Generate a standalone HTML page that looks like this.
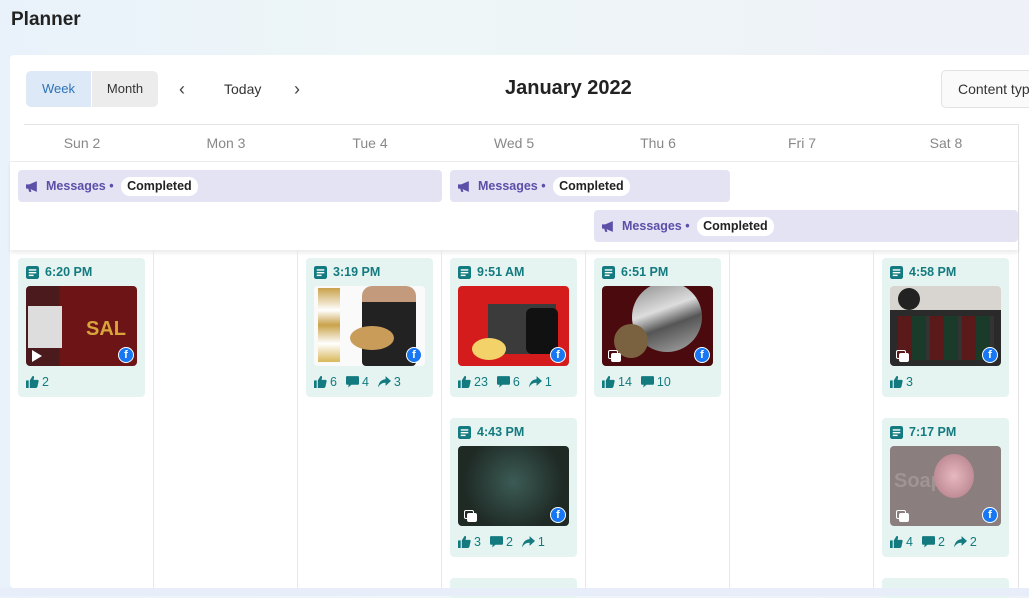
<!DOCTYPE html>
<html><head><meta charset="utf-8"><style>
*{box-sizing:border-box;margin:0;padding:0}
body{width:1029px;height:596px;overflow:hidden;position:relative;font-family:"Liberation Sans",sans-serif;background:linear-gradient(90deg,#e9f2fb 0%,#eef6f7 40%,#eef1f8 100%)}
.a{position:absolute}
h1{position:absolute;left:11px;top:9px;font-size:19px;font-weight:bold;color:#222}
.panel{left:10px;top:55px;width:1030px;height:533px;background:#fff;border-radius:4px}
.seg{top:71px;height:36px;border-radius:5px;font-size:13px;line-height:36px;text-align:center}
.day{top:125px;height:36px;line-height:36px;width:144px;text-align:center;font-size:14px;color:#888}
.vl{width:1px;background:#e8e8e8;top:250px;height:346px}
.bar{height:32px;background:#e3e3f4;border-radius:4px;font-size:12.5px;font-weight:bold;color:#5b4fa8;line-height:32px;padding-left:28px}
.bar svg{position:absolute;left:8px;top:11px}
.pill{display:inline-block;background:#fff;color:#222;border-radius:9px;padding:0 6px;line-height:19px;font-weight:bold;margin-left:4px}
.card{width:127px;height:139px;background:#e6f4f1;border-radius:4px}
.t{position:absolute;left:8px;top:7px;font-size:12.5px;font-weight:bold;color:#137b80;padding-left:19px;line-height:14px}
.t svg{position:absolute;left:0;top:1px}
.img{position:absolute;left:8px;top:28px;width:111px;height:80px;border-radius:4px;overflow:hidden}
.fb{position:absolute;right:3px;bottom:3px;width:16px;height:16px;border-radius:50%;background:#1877f2;border:1.5px solid #fff;color:#fff;font-size:11px;font-weight:bold;text-align:center;line-height:14px}
.st{position:absolute;left:8px;top:117px;font-size:12.5px;color:#137b80;line-height:14px;white-space:nowrap}
.st span{margin-right:9px}
.st svg{vertical-align:-2px;margin-right:3px}
.multi{position:absolute;left:6px;bottom:4px;width:14px;height:12px}
.multi i{position:absolute;border:1.5px solid #fff;border-radius:2px;width:10px;height:9px}
</style></head><body>
<svg width="0" height="0" style="position:absolute"><defs>
<symbol id="doc" viewBox="0 0 12 12"><rect x="0" y="0" width="12" height="12" rx="2" fill="#137b80"/><rect x="2.5" y="3" width="7" height="1.3" fill="#fff"/><rect x="2.5" y="5.5" width="7" height="1.3" fill="#fff"/><rect x="2.5" y="8" width="4.5" height="1.3" fill="#fff"/></symbol>
<symbol id="like" viewBox="0 0 12 12"><rect x="0" y="5" width="2.5" height="7" fill="#137b80"/><path d="M3.5 5 L6 1 Q7.5 0.5 7.5 2 L7 4.5 L11 4.5 Q12 5 11.6 6 L10.5 11 Q10 12 9 12 L3.5 12Z" fill="#137b80"/></symbol>
<symbol id="cm" viewBox="0 0 12 12"><path d="M1 1 H11 Q12 1 12 2 V8 Q12 9 11 9 H5 L2 11.5 L2.5 9 H1 Q0 9 0 8 V2 Q0 1 1 1Z" fill="#137b80"/></symbol>
<symbol id="sh" viewBox="0 0 12 12"><path d="M7 1 L12 5.5 L7 10 V7.2 Q2.5 7 0 11.5 Q0.8 4.5 7 3.8Z" fill="#137b80"/></symbol>
<symbol id="mega" viewBox="0 0 12 10"><path d="M0 3 H3 L10 0 V10 L3 7 H0Z M4 7 L5 10 H3 L2 7Z" fill="#5b4fa8"/></symbol>
</defs></svg>
<h1>Planner</h1>
<div class="a panel"></div>
<div class="a seg" style="left:26px;width:65px;background:#dde9f6;color:#2d72b8;border-radius:5px 0 0 5px">Week</div>
<div class="a seg" style="left:92px;width:66px;background:#ececec;color:#333;border-radius:0 5px 5px 0">Month</div>
<div class="a" style="left:179px;top:79px;font-size:18px;color:#444">‹</div>
<div class="a" style="left:224px;top:81px;font-size:14px;color:#333">Today</div>
<div class="a" style="left:294px;top:79px;font-size:18px;color:#444">›</div>
<div class="a" style="left:505px;top:77px;font-size:20px;font-weight:bold;color:#222">January 2022</div>
<div class="a" style="left:941px;top:70px;width:100px;height:38px;border:1px solid #e2e2e2;border-radius:5px;background:#fafafa;font-size:14px;color:#333;line-height:36px;padding-left:16px;white-space:nowrap">Content type</div>
<div class="a" style="left:24px;top:124px;width:995px;height:1px;background:#e4e4e4"></div>
<div class="a" style="left:10px;top:161px;width:1009px;height:1px;background:#ececec"></div>
<div class="a" style="left:1018px;top:124px;width:1px;height:472px;background:#e4e4e4"></div>
<div class="a" style="left:10px;top:161px;width:1008px;height:89px;box-shadow:0 3px 4px rgba(0,0,0,.08)"></div>
<div class="a day" style="left:10px">Sun 2</div>
<div class="a day" style="left:154px">Mon 3</div>
<div class="a day" style="left:298px">Tue 4</div>
<div class="a day" style="left:442px">Wed 5</div>
<div class="a day" style="left:586px">Thu 6</div>
<div class="a day" style="left:730px">Fri 7</div>
<div class="a day" style="left:874px">Sat 8</div>
<div class="a vl" style="left:153px"></div><div class="a vl" style="left:297px"></div><div class="a vl" style="left:441px"></div><div class="a vl" style="left:585px"></div><div class="a vl" style="left:729px"></div><div class="a vl" style="left:873px"></div>
<div class="a bar" style="left:18px;top:170px;width:424px"><svg width="13" height="11"><use href="#mega"/></svg>Messages • <span class="pill">Completed</span></div>
<div class="a bar" style="left:450px;top:170px;width:280px"><svg width="13" height="11"><use href="#mega"/></svg>Messages • <span class="pill">Completed</span></div>
<div class="a bar" style="left:594px;top:210px;width:424px"><svg width="13" height="11"><use href="#mega"/></svg>Messages • <span class="pill">Completed</span></div>

<!-- Sun -->
<div class="a card" style="left:18px;top:258px"><div class="t"><svg width="13" height="13"><use href="#doc"/></svg>6:20 PM</div>
<div class="img" style="background:linear-gradient(90deg,#4a1a1c 0 30%,#6d1416 30%)"><div class="a" style="left:2px;top:20px;width:34px;height:42px;background:#ddd"></div><div class="a" style="left:60px;top:32px;color:#d9a43a;font-weight:bold;font-size:20px">SAL</div><div class="a" style="left:6px;bottom:4px;width:0;height:0;border-left:10px solid #fff;border-top:6px solid transparent;border-bottom:6px solid transparent"></div><div class="fb">f</div></div>
<div class="st"><span><svg width="13" height="13"><use href="#like"/></svg>2</span></div></div>
<!-- Tue -->
<div class="a card" style="left:306px;top:258px"><div class="t"><svg width="13" height="13"><use href="#doc"/></svg>3:19 PM</div>
<div class="img" style="background:#fafafa"><div class="a" style="left:4px;top:2px;width:22px;height:74px;background:linear-gradient(#c9a24a,#fff 30%,#c9a24a 50%,#fff 75%,#d9b85a)"></div><div class="a" style="left:48px;top:0;width:54px;height:80px;border-radius:10px 10px 4px 4px;background:linear-gradient(#c49a7c 0 20%,#222 20%)"></div><div class="a" style="left:36px;top:40px;width:44px;height:24px;border-radius:50%;background:#c99c5a"></div><div class="fb">f</div></div>
<div class="st"><span><svg width="13" height="13"><use href="#like"/></svg>6</span><span><svg width="13" height="13"><use href="#cm"/></svg>4</span><span><svg width="13" height="13"><use href="#sh"/></svg>3</span></div></div>
<!-- Wed -->
<div class="a card" style="left:450px;top:258px"><div class="t"><svg width="13" height="13"><use href="#doc"/></svg>9:51 AM</div>
<div class="img" style="background:#d51c1c"><div class="a" style="left:30px;top:18px;width:68px;height:50px;background:#3b3b3b"></div><div class="a" style="left:68px;top:22px;width:32px;height:46px;border-radius:6px;background:#111"></div><div class="a" style="left:14px;top:52px;width:34px;height:22px;border-radius:50%;background:#f3d26a"></div><div class="fb">f</div></div>
<div class="st"><span><svg width="13" height="13"><use href="#like"/></svg>23</span><span><svg width="13" height="13"><use href="#cm"/></svg>6</span><span><svg width="13" height="13"><use href="#sh"/></svg>1</span></div></div>
<div class="a card" style="left:450px;top:418px"><div class="t"><svg width="13" height="13"><use href="#doc"/></svg>4:43 PM</div>
<div class="img" style="background:radial-gradient(circle at 50% 45%,#3c5b55,#1f2a25 70%)"><div class="multi"><i style="left:0;top:0"></i><i style="left:3px;top:3px;background:#fff"></i></div><div class="fb">f</div></div>
<div class="st"><span><svg width="13" height="13"><use href="#like"/></svg>3</span><span><svg width="13" height="13"><use href="#cm"/></svg>2</span><span><svg width="13" height="13"><use href="#sh"/></svg>1</span></div></div>
<div class="a card" style="left:450px;top:578px;height:20px"></div>
<!-- Thu -->
<div class="a card" style="left:594px;top:258px"><div class="t"><svg width="13" height="13"><use href="#doc"/></svg>6:51 PM</div>
<div class="img" style="background:#4a0a0e"><div class="a" style="left:30px;top:-4px;width:70px;height:70px;border-radius:50%;background:linear-gradient(160deg,#888,#ddd 40%,#555 60%,#aaa)"></div><div class="a" style="left:12px;top:38px;width:34px;height:34px;border-radius:50%;background:#7a6240"></div><div class="multi"><i style="left:0;top:0"></i><i style="left:3px;top:3px;background:#fff"></i></div><div class="fb">f</div></div>
<div class="st"><span><svg width="13" height="13"><use href="#like"/></svg>14</span><span><svg width="13" height="13"><use href="#cm"/></svg>10</span></div></div>
<!-- Sat -->
<div class="a card" style="left:882px;top:258px"><div class="t"><svg width="13" height="13"><use href="#doc"/></svg>4:58 PM</div>
<div class="img" style="background:linear-gradient(#d8d4d0 0 30%,#2a2a2a 30%)"><div class="a" style="left:8px;top:2px;width:22px;height:22px;border-radius:50%;background:#222"></div><div class="a" style="left:8px;top:30px;width:96px;height:44px;background:repeating-linear-gradient(90deg,#5a1a1a 0 14px,#1a3a2a 14px 28px,#333 28px 32px)"></div><div class="multi"><i style="left:0;top:0"></i><i style="left:3px;top:3px;background:#fff"></i></div><div class="fb">f</div></div>
<div class="st"><span><svg width="13" height="13"><use href="#like"/></svg>3</span></div></div>
<div class="a card" style="left:882px;top:418px"><div class="t"><svg width="13" height="13"><use href="#doc"/></svg>7:17 PM</div>
<div class="img" style="background:#8a7e7e"><div class="a" style="left:4px;top:24px;font-size:20px;font-weight:bold;color:#a09494">Soap</div><div class="a" style="left:44px;top:8px;width:40px;height:44px;border-radius:50%;background:radial-gradient(#e6b8c0,#b07a84)"></div><div class="multi"><i style="left:0;top:0"></i><i style="left:3px;top:3px;background:#fff"></i></div><div class="fb">f</div></div>
<div class="st"><span><svg width="13" height="13"><use href="#like"/></svg>4</span><span><svg width="13" height="13"><use href="#cm"/></svg>2</span><span><svg width="13" height="13"><use href="#sh"/></svg>2</span></div></div>
<div class="a card" style="left:882px;top:578px;height:20px"></div>
<div class="a" style="left:0;top:588px;width:1029px;height:8px;background:#e8eef9"></div>
</body></html>
